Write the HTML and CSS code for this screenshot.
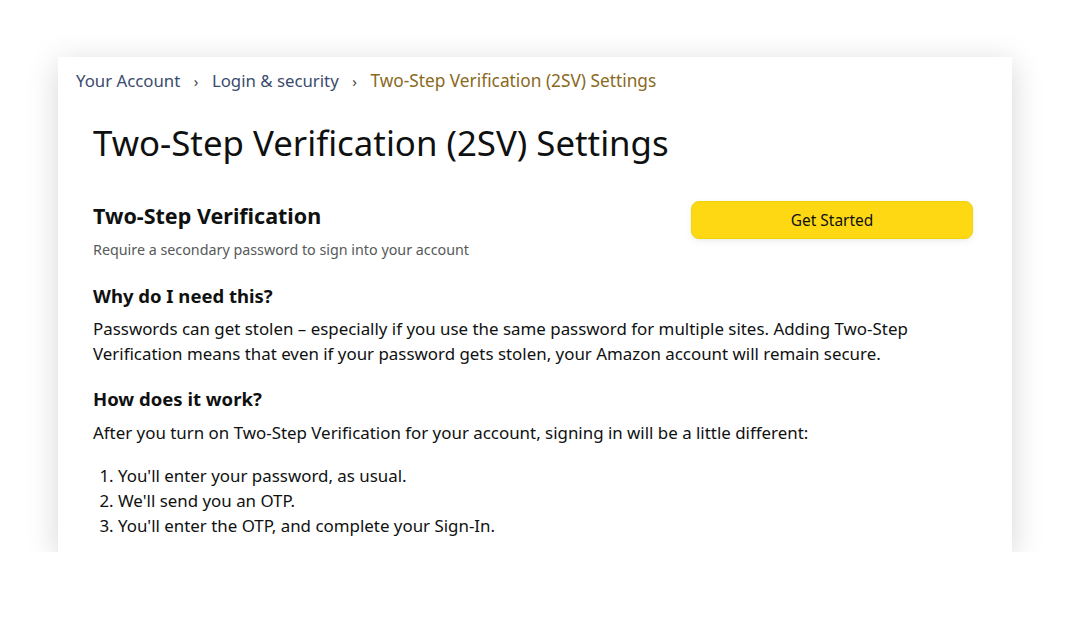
FILE: index.html
```html
<!DOCTYPE html>
<html>
<head>
<meta charset="utf-8">
<link rel="stylesheet" href="styles.css">
</head>
<body>
<div class="card">
  <nav class="crumbs">
    <a class="crumb-link">Your Account</a>
    <span class="sep">›</span>
    <a class="crumb-link">Login &amp; security</a>
    <span class="sep">›</span>
    <span class="crumb-current">Two-Step Verification (2SV) Settings</span>
  </nav>
  <div class="content">
    <h1 class="title">Two-Step Verification (2SV) Settings</h1>
    <div class="row">
      <div class="row-text">
        <h2 class="h2">Two-Step Verification</h2>
        <p class="sub">Require a secondary password to sign into your account</p>
      </div>
      <button class="btn">Get Started</button>
    </div>
    <h3 class="h3 why">Why do I need this?</h3>
    <p class="para">Passwords can get stolen – especially if you use the same password for multiple sites. Adding Two-Step Verification means that even if your password gets stolen, your Amazon account will remain secure.</p>
    <h3 class="h3 how">How does it work?</h3>
    <p class="para para-how">After you turn on Two-Step Verification for your account, signing in will be a little different:</p>
    <ol class="steps">
      <li>You'll enter your password, as usual.</li>
      <li>We'll send you an OTP.</li>
      <li>You'll enter the OTP, and complete your Sign-In.</li>
    </ol>
  </div>
</div>
</body>
</html>
```

FILE: styles.css
```css
html, body {
  margin: 0;
  padding: 0;
  background: #ffffff;
}
body {
  font-family: "Noto Sans", "Open Sans", sans-serif;
  color: #0f1111;
  padding: 57px 70px 0 58px;
  width: 954px;
}
.card {
  background: #fff;
  box-shadow: 0 6px 30px rgba(0, 0, 0, 0.17);
  height: 495px;
  box-sizing: border-box;
}
.crumbs {
  display: flex;
  align-items: center;
  padding: 12px 0 0 18px;
  font-size: 16.8px;
  line-height: 24px;
}
.crumb-link {
  color: #3b4b6e;
}
.sep {
  color: #444;
  font-size: 15px;
  margin: 0 13.5px;
}
.crumb-current {
  color: #89691c;
  font-size: 17.3px;
}
.content {
  padding: 0 39px 0 35px;
}
.title {
  font-size: 34.8px;
  font-weight: 400;
  line-height: 40px;
  margin: 30px 0 0 0;
}
.row {
  display: flex;
  justify-content: space-between;
  align-items: flex-start;
  margin-top: 39px;
}
.h2 {
  font-size: 21.5px;
  font-weight: 700;
  line-height: 28px;
  margin: 0;
}
.sub {
  font-size: 14.3px;
  color: #565959;
  line-height: 20px;
  margin: 10px 0 0 0;
}
.btn {
  width: 282px;
  height: 38px;
  margin-top: -1px;
  background: #ffd814;
  border: 1px solid #f2d200;
  border-radius: 8px;
  box-shadow: 0 2px 5px rgba(213, 217, 217, 0.5);
  font-family: inherit;
  font-size: 15.5px;
  color: #0f1111;
}
.h3 {
  font-size: 18.5px;
  font-weight: 700;
  line-height: 24px;
  margin: 0;
}
.why {
  margin-top: 24px;
}
.how {
  margin-top: 21px;
}
.para {
  font-size: 16.9px;
  line-height: 25px;
  margin: 8px 0 0 0;
}
.para-how {
  margin-top: 9px;
}
.steps {
  font-size: 16.9px;
  line-height: 25px;
  margin: 18px 0 0 0;
  padding-left: 25px;
}
```
